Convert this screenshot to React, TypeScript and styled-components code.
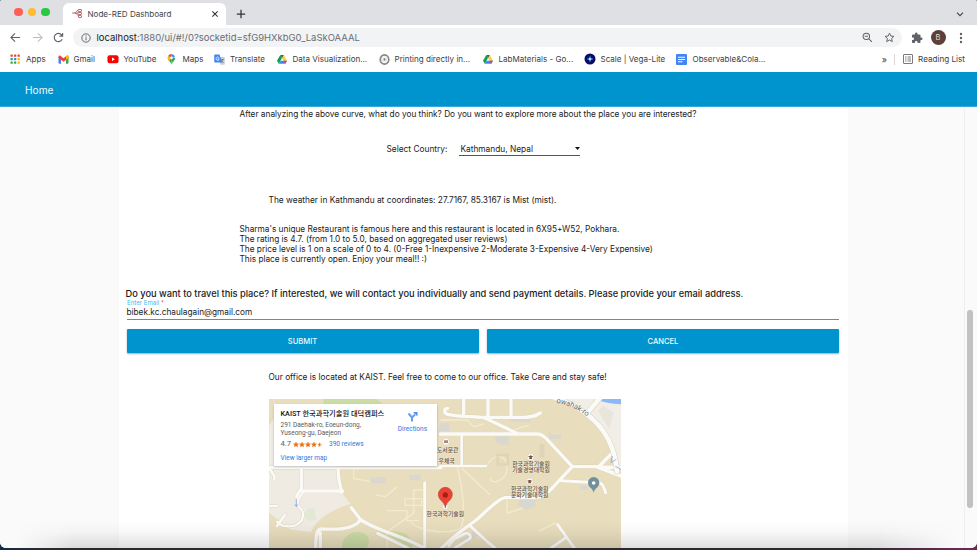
import React from "react";
import styled, { createGlobalStyle } from "styled-components";

const Global = createGlobalStyle`
  * { box-sizing: border-box; }
  html, body { margin: 0; height: 550px; overflow: hidden; background: #fff; }
  body { font-family: Inter, "Noto Sans CJK KR", sans-serif; color: #1b1b1b; }
  svg { display: block; flex: none; }
`;

const Desktop = styled.div`
  width: 977px;
  height: 550px;
  padding-bottom: 2px;
  background: linear-gradient(90deg, #132a4c 0%, #292a30 4%, #292a30 88%, #6d2850 98%);
  overflow: hidden;
`;
const Window = styled.div`
  position: relative;
  height: 548px;
  display: flex;
  flex-direction: column;
  background: #fff;
  border-radius: 2px 2px 6px 6px;
  overflow: hidden;
`;
const TabStrip = styled.div`
  height: 25px;
  flex: none;
  display: flex;
  align-items: flex-end;
  background: #dee0e4;
`;
const Lights = styled.div`
  display: flex;
  gap: 5px;
  width: 63px;
  height: 25px;
  padding: 7.5px 0 0 14px;
`;
const Light = styled.span<{ $color: string }>`
  width: 8.6px;
  height: 8.6px;
  border-radius: 50%;
  background: ${(p) => p.$color};
`;
const Tab = styled.div`
  display: flex;
  align-items: center;
  width: 163px;
  height: 22.5px;
  padding: 0 7.5px 0 9px;
  background: #fff;
  border-radius: 6px 6px 0 0;
  font-size: 8.07px;
  color: #43464a;
`;
const TabTitle = styled.span`
  flex: 1;
  margin-left: 5.5px;
  white-space: nowrap;
`;
const StripActions = styled.div`
  flex: 1;
  height: 22.5px;
  display: flex;
  align-items: center;
  justify-content: space-between;
  padding: 0 13px 0 10px;
`;
const Toolbar = styled.div`
  height: 25px;
  flex: none;
  display: flex;
  align-items: center;
  padding: 0 0 0 10px;
`;
const NavIcons = styled.div`
  display: flex;
  align-items: center;
  width: 63px;
  gap: 10.5px;
`;
const Omnibox = styled.div`
  display: flex;
  align-items: center;
  width: 829px;
  height: 19px;
  padding: 0 7px 0 8px;
  border-radius: 10px;
  background: #f1f3f4;
  font-size: 9.46px;
  color: #6a6e73;
`;
const Url = styled.span`
  flex: 1;
  margin-left: 5.5px;
  white-space: nowrap;
  b { font-weight: 400; color: #202124; }
`;
const OmniActions = styled.div`
  display: flex;
  gap: 11px;
`;
const Extensions = styled.div`
  display: flex;
  align-items: center;
  gap: 8px;
  margin-left: 8.5px;
`;
const Avatar = styled.span`
  display: grid;
  place-items: center;
  width: 15px;
  height: 15px;
  border-radius: 50%;
  background: #5d4037;
  color: #e6dcd8;
  font-size: 7.5px;
`;
const Bookmarks = styled.div`
  height: 22px;
  flex: none;
  display: flex;
  align-items: center;
  padding: 0 12px 4px 10px;
  font-size: 8.04px;
  color: #3c4043;
`;
const Bookmark = styled.span<{ $width: number; $gap?: number }>`
  display: flex;
  align-items: center;
  gap: ${(p) => p.$gap ?? 5}px;
  width: ${(p) => p.$width}px;
  white-space: nowrap;
`;
const Overflow = styled.span`
  margin-left: auto;
  font-size: 9px;
  padding-right: 7px;
`;
const ReadingList = styled.span`
  display: flex;
  align-items: center;
  gap: 5.5px;
  height: 11px;
  padding-left: 7.5px;
  border-left: 1px solid #d5d7da;
  font-size: 8.12px;
`;
const AppHeader = styled.header`
  height: 35px;
  flex: none;
  display: flex;
  align-items: center;
  padding: 1px 0 0 25px;
  background: #0094ce;
  border-bottom: 1px solid #35a9d8;
  color: #eef9fd;
  font-size: 10.17px;
`;
const Page = styled.main`
  flex: 1;
  min-height: 0;
  display: flex;
  background: #fafafa;
`;
const Card = styled.section`
  width: 729px;
  margin-left: 118.5px;
  padding: 1px 8px 0;
  background: #fff;
  display: flex;
  flex-direction: column;
  align-items: flex-start;
`;
const Line = styled.p<{ $top?: number; $indent: number; $size?: number }>`
  margin: ${(p) => p.$top ?? 0}px 0 0 ${(p) => p.$indent}px;
  line-height: 12px;
  font-size: ${(p) => p.$size ?? 8.27}px;
  white-space: nowrap;
`;
const Paragraph = styled(Line)`
  line-height: 10.2px;
  white-space: pre;
`;
const SelectRow = styled.div`
  display: flex;
  align-items: center;
  gap: 11.5px;
  height: 16px;
  margin: 21px 0 0 260px;
  font-size: 8.33px;
`;
const Select = styled.div`
  display: flex;
  align-items: center;
  justify-content: space-between;
  width: 121px;
  height: 15px;
  padding: 1px 0 0 1.5px;
  border-bottom: 1px solid #555;
`;
const Heading = styled.h3`
  margin: 23px 0 0 -1px;
  font-size: 9.285px;
  font-weight: 500;
  line-height: 12px;
  white-space: nowrap;
`;
const Field = styled.label`
  display: block;
  width: 712.5px;
  height: 20.5px;
  border-bottom: 1px solid #27a3d6;
`;
const FieldLabel = styled.span`
  display: block;
  height: 6.2px;
  padding-left: .5px;
  line-height: 6.2px;
  font-size: 6.11px;
  color: #3dbbf0;
  i { font-style: normal; color: #ef5350; }
`;
const FieldValue = styled.span`
  display: block;
  line-height: 13px;
  font-size: 8.26px;
`;
const Actions = styled.div`
  display: grid;
  grid-template-columns: 1fr 1fr;
  gap: 8.5px;
  width: 712.5px;
  margin-top: 8.7px;
`;
const Button = styled.button`
  height: 24px;
  padding: 1px 0 0;
  border: 0;
  border-radius: 1px;
  background: #0094ce;
  box-shadow: 0 1px 2px rgba(0, 0, 0, .35);
  color: #f4fbfe;
  font: 500 7.55px Inter, sans-serif;
`;
const MapFrame = styled.div`
  position: relative;
  width: 352px;
  height: 150px;
  margin: 16px 0 0 142px;
  overflow: hidden;
`;
const PlaceCard = styled.div`
  position: absolute;
  left: 5.5px;
  top: 5px;
  width: 163px;
  height: 62px;
  padding: 5px 9px 0 6.5px;
  background: #fff;
  box-shadow: 0 1px 2px rgba(0, 0, 0, .25);
  font: 6.5px/8px Roboto, "Noto Sans CJK KR", sans-serif;
  color: #5b5b5b;
  white-space: nowrap;
`;
const PlaceName = styled.div`
  height: 10px;
  line-height: 10px;
  font-size: 7.25px;
  font-weight: 500;
  color: #111;
`;
const Address = styled.div`
  margin-top: 3.7px;
  line-height: 7.6px;
`;
const Rating = styled.div`
  display: flex;
  align-items: center;
  gap: 2px;
  margin-top: 2.5px;
  height: 8px;
  b { font-weight: 400; font-size: 7.6px; }
`;
const Link = styled.a<{ $left?: number; $top?: number }>`
  display: block;
  margin: ${(p) => p.$top ?? 0}px 0 0 ${(p) => p.$left ?? 0}px;
  color: #2a78dd;
`;
const Directions = styled.div`
  position: absolute;
  right: 10px;
  top: 7.5px;
  display: flex;
  flex-direction: column;
  align-items: center;
  gap: 2.5px;
  color: #2a78dd;
`;
const Scrollbar = styled.div`
  width: 10px;
  margin: 0 3px 0 auto;
  padding: 203px 0 0 2px;
  border-left: 1px solid #efefef;
`;
const Thumb = styled.div`
  width: 5.5px;
  height: 198px;
  border-radius: 3px;
  background: #c1c1c1;
`;
const DockShade = styled.div`
  position: absolute;
  left: 15px;
  right: 20px;
  bottom: 0;
  height: 28px;
  background: linear-gradient(rgba(0, 0, 0, 0), rgba(0, 0, 0, .025) 40%, rgba(0, 0, 0, .12));
  mask-image: linear-gradient(90deg, transparent, #000 60px, #000 calc(100% - 80px), transparent);
  pointer-events: none;
`;

const Stroke = ({ size, d, color = "#5f6368", w = 2 }: { size: number; d: string; color?: string; w?: number }) => (
  <svg width={size} height={size} viewBox="0 0 24 24" fill="none" stroke={color} strokeWidth={w}>
    <path d={d} />
  </svg>
);

const NodeRed = () => (
  <svg width="10" height="9" viewBox="0 0 20 18" fill="none" stroke="#b0585c" strokeWidth="1.7">
    <path d="M0 8h5c4 0 3-5 7-5M5 8c6 0 5 6 9 6M6 8h6" />
    <rect x="12" y="1" width="7" height="4" rx="1" />
    <rect x="12" y="7" width="7" height="4" rx="1" />
    <rect x="13" y="13" width="6" height="4" rx="1" />
  </svg>
);
const colors = ["#ea4335", "#ea4335", "#ea4335", "#34a853", "#4285f4", "#fbbc04", "#34a853", "#34a853", "#fbbc04"];
const AppsGrid = () => (
  <svg width="10.5" height="10" viewBox="0 0 21 20">
    {colors.map((c, i) => (
      <rect key={i} x={1 + (i % 3) * 7} y={1 + Math.floor(i / 3) * 7} width="4.6" height="4.6" rx="1" fill={c} />
    ))}
  </svg>
);
const Gmail = () => (
  <svg width="11" height="9" viewBox="0 0 22 17">
    <path d="M1 3v12a2 2 0 0 0 2 2h3V7z" fill="#4285f4" />
    <path d="M21 3v12a2 2 0 0 1-2 2h-3V7z" fill="#34a853" />
    <path d="M1 3c0-3 3-3 5-1l5 4 5-4c2-2 5-2 5 1v2l-5 4-5 4-5-4-5-4z" fill="#ea4335" />
    <path d="M16 2c2-2 5-2 5 1v3l-5 3z" fill="#fbbc04" />
  </svg>
);
const YouTube = () => (
  <svg width="12" height="9" viewBox="0 0 24 17">
    <rect x="1" y="0" width="22" height="16" rx="4" fill="#f00" />
    <path d="M10 4.5v7l6-3.5z" fill="#fff" />
  </svg>
);
const MapsPin = () => (
  <svg width="9" height="11" viewBox="0 0 18 23">
    <path d="M9 23C8 16 1 14 1 8l8 0z" fill="#34a853" />
    <path d="M9 23c1-7 8-9 8-15H9z" fill="#34a853" />
    <path d="M2 12a8 8 0 0 1 0-8l7 4-5 7z" fill="#fbbc04" />
    <path d="M2 4a8 8 0 0 1 7-4v8z" fill="#ea4335" />
    <path d="M9 0a8 8 0 0 1 7 5L9 11z" fill="#4285f4" />
    <circle cx="9" cy="8" r="3" fill="#fff" />
  </svg>
);
const Translate = () => (
  <svg width="11" height="11" viewBox="0 0 22 22">
    <path d="M9 6h11a1.5 1.5 0 0 1 1.5 1.5V20a1.5 1.5 0 0 1-1.5 1.5h-7z" fill="#c9ccd1" />
    <path d="M2 1h9l5 16H2a1.5 1.5 0 0 1-1.5-1.5v-13A1.5 1.5 0 0 1 2 1z" fill="#4285f4" />
    <path d="M10 7.5A3.2 3.2 0 1 0 10.5 10H7.5" stroke="#fff" strokeWidth="1.5" fill="none" />
    <path d="M14 11h6M17 10v1c0 3-2 5-3 6m1-4 4 5" stroke="#5f6368" strokeWidth="1.2" fill="none" />
  </svg>
);
const Drive = () => (
  <svg width="10" height="9" viewBox="0 0 20 18">
    <path d="M6.5 0 0 11.5 3.5 17.5 10 6z" fill="#0f9d58" />
    <path d="M6.5 0h7L20 11.5h-7z" fill="#ffcd40" />
    <path d="M3.5 17.5 7 11.5h13l-3.5 6z" fill="#4285f4" />
    <path d="M13 11.5h7l-3.5 6z" fill="#ea4335" />
    <path d="M6.5 0h7L10 6z" fill="#188038" />
  </svg>
);
const Observable = () => (
  <svg width="11" height="11" viewBox="0 0 22 22" fill="none">
    <ellipse cx="11" cy="11" rx="8.5" ry="9.2" stroke="#858585" strokeWidth="3.4" />
    <circle cx="11" cy="11" r="5" stroke="#d8d8d8" strokeWidth="1.5" />
    <circle cx="11" cy="11" r="2.3" fill="#777" />
  </svg>
);
const Vega = () => (
  <svg width="12" height="12" viewBox="0 0 24 24">
    <circle cx="12" cy="12" r="11" fill="#0b0b66" />
    <path d="M12 5l1.8 5.2L19 12l-5.2 1.8L12 19l-1.8-5.2L5 12l5.2-1.8z" fill="#49a5e6" />
    <circle cx="12" cy="12" r="2" fill="#d8f3ff" />
  </svg>
);
const Docs = () => (
  <svg width="11" height="11" viewBox="0 0 22 22">
    <rect width="22" height="22" rx="2" fill="#4285f4" />
    <path d="M4 6.5h14M4 11h14M4 15.5h9" stroke="#fff" strokeWidth="2" />
  </svg>
);
const ListIcon = () => (
  <svg width="10" height="10" viewBox="0 0 20 20" fill="none" stroke="#5f6368" strokeWidth="1.7">
    <rect x="1" y="1" width="18" height="18" rx="1" />
    <path d="M4 6h3M4 10h3M4 14h3M9 6h7M9 10h7M9 14h7" />
  </svg>
);
const Puzzle = () => (
  <svg width="12" height="12" viewBox="0 0 24 24" fill="#5f6368">
    <path d="M20.5 11H19V7a2 2 0 0 0-2-2h-4V3.5a2.5 2.5 0 0 0-5 0V5H4a2 2 0 0 0-2 2v3.8h1.5a2.7 2.7 0 0 1 0 5.4H2V20a2 2 0 0 0 2 2h3.8v-1.5a2.7 2.7 0 0 1 5.4 0V22H17a2 2 0 0 0 2-2v-4h1.5a2.5 2.5 0 0 0 0-5z" />
  </svg>
);
const star = "M12 2.5l2.9 6.3 6.8.7-5.1 4.6 1.5 6.8L12 17.4l-6.1 3.5 1.5-6.8-5.1-4.6 6.8-.7z";
const Stars = () => (
  <svg width="30" height="7" viewBox="0 0 120 26">
    {[0, 1, 2, 3, 4].map((i) => (
      <path key={i} d={star} transform={`translate(${i * 24},1)`} fill={i === 4 ? "#f0bb86" : "#e7711b"} stroke={i === 4 ? "none" : "#e7711b"} strokeWidth="2" />
    ))}
    <path d="M108 3.5v15l-6 3.5 1.5-7-5-4.5 6.5-.7z" fill="#e7711b" />
  </svg>
);

const Road = styled.path<{ $w?: number }>`
  fill: none;
  stroke: #fbfaf7;
  stroke-width: ${(p) => p.$w ?? 9};
  stroke-linecap: round;
  stroke-linejoin: round;
`;
const Casing = styled(Road)`
  stroke: #ded4ba;
`;
const MapLabel = styled.text`
  font: 500 17.5px "Noto Sans CJK KR", sans-serif;
  fill: #5b5145;
  stroke: #f8f0dc;
  stroke-width: 2px;
  paint-order: stroke;
  text-anchor: middle;
`;

const roads: [string, number][] = [
  ["M26 232h205M234 228c-4 30 4 50 10 80M125 303h122M123 235v60l-15 25", 10],
  ["M128 303c5 10-20 16-16 40 4 20 20 10 16 36-5 25-30 35-60 28-10-3-14-6-18-12", 7],
  ["M26 348h24M50 408l24-34M26 233l16 25v10", 8],
  ["M273 353l28 36c40 30 130 50 190 85M301 389c-20 30-70 30-120 28-12 2-15 20-15 57M180 428v46", 10],
  ["M493 278v196M352 430l90 44M232 233h310", 9],
  ["M540 132h290c12 0 20 6 28 14l78 84h80M936 230l-62 66c-16 18-30 26-50 27h-90c-22 3-60 45-90 70-30 22-60 40-100 81", 10],
  ["M562 55c-12 0-12 16 0 18 40 8 80 6 110 10l96 46M610 28v44M683 28v50M752 28v50M650 82h140c15 0 30 0 50-13", 10],
  ["M604 134v90M540 228h137", 8],
  ["M902 272l112 6c12 0 16 12 22 30", 9],
  ["M628 406l54 50 22 18M892 404l50 70M912 446l-40 28", 9],
  ["M584 474l45-28c5-12-7-20-18-14l-30 16-16 20", 8],
  ["M1012 232h70M1020 225l30-30M1020 234l62 24", 11],
];

const CampusMap = () => (
  <svg width="352" height="150" viewBox="26 27 1056 450">
    <rect x="26" y="27" width="1056" height="450" fill="#e8ddbd" />
    <path d="M26 27h16v205h192c0 40 0 70 38 110-40 10-80 30-108 62l-12 22-62-8-64-50z" fill="#efebe3" />
    <path d="M26 27h14v60l-14 20z" fill="#e8ddbd" />
    <path d="M188 27h160l24 18H190z" fill="#cbdba5" />
    <path d="M245 474c0-30 20-48 45-48 30 0 45 20 30 48zM352 430c10-12 60-10 85 2 15 15 20 25 20 42-30-10-60-35-105-44z" fill="#cbdba5" />
    <path d="M142 355h20l6 35-26 3-10-16z" fill="#e1e8d6" />
    <path d="M890 27h192v200h-20c-10-85-50-150-172-200z" fill="#f1eee7" />
    <path d="M1005 27h77v16c-30-1-54-6-77-16z" fill="#8db8f8" />
    <path d="M1013 62l16-15 30 20-12 50z" fill="#e9e5db" />
    <g fill="none" stroke="#f3ebcf" strokeWidth="4">
      <path d="M590 225c15 60 30 160 10 190-40 20-120 10-150-20M604 235l86 80M726 160l-10-25c30-5 60-25 90-28M680 225c15-30 60-40 60 10 0 40-50 50-50 30M540 90h80l20 20 30-8M835 424l52-26" />
      <path d="M380 475v-50l80-55v-70h30M410 290l-35 30-30-6M280 230v35l50 10M820 210v35h30M740 320v50l60-20v-25" />
      <path d="M380 362h60v30h35M434 326h50v20h-50z" />
    </g>
    <g fill="#d9d7cf">
      <path d="M331 262h45v18h-45zM447 255h34v16h-34zM540 99h27v25h-35zM705 139h40v25h-25v-6h-15zM750 86h58v10h-58zM865 124l10 10h27v13h-36zM777 326h48v22l-28 12-24-14zM600 450l44-30 10 15-45 34zM960 287h22v12h-22z" />
    </g>
    <path d="M712 195h30v28h-30z" fill="none" stroke="#e0d4b2" strokeWidth="7" />
    <path d="M838 163h14v40h-14z" fill="#ded4b9" />
    {roads.map(([d, w], i) => <Casing key={i} d={d} $w={w + 2.5} />)}
    {roads.map(([d, w], i) => <Road key={i} d={d} $w={w} />)}
    <Casing d="M875 20c120 40 185 110 195 225M980 70l42-50" $w={17} />
    <Road d="M875 20c120 40 185 110 195 225M980 70l42-50" $w={14} />
    <path d="M1056 198l-4 20 16-10M1065 229l17 9M108 328v20m-5-5 5 7 5-7" fill="none" stroke="#86a7ee" strokeWidth="2.5" />
    <path id="gwahak" d="M888 38c40 7 70 22 125 66" fill="none" />
    <text fontFamily="Roboto" fontSize="22" fill="#6b6b6b"><textPath href="#gwahak">owahak-ro</textPath></text>
    <g fill="#fff" stroke="#d6cbb0" strokeWidth="1.5">
      <circle cx="557" cy="155" r="10" />
      <circle cx="811" cy="201" r="10" />
      <circle cx="808" cy="274" r="10" />
      <circle cx="555" cy="350" r="8" />
    </g>
    <path d="M552 151h4v8h-4zM558 151h4v8h-4zM803 200l8-4 8 4-8 4zM807 203h8v4h-8zM800 273l8-4 8 4-8 4zM804 276h8v4h-8z" fill="#75533f" />
    <MapLabel x="562" y="185">도서문관</MapLabel>
    <MapLabel x="559" y="219">우체국</MapLabel>
    <MapLabel x="812" y="229">한국과학기술원</MapLabel>
    <MapLabel x="812" y="247">기술경영대학원</MapLabel>
    <MapLabel x="808" y="302">한국과학기술원</MapLabel>
    <MapLabel x="808" y="320">문화기술대학원</MapLabel>
    <MapLabel x="555" y="378">한국과학기술원</MapLabel>
    <path d="M555 354c-3-22-21-22-21-41a21 21 0 0 1 42 0c0 19-18 19-21 41z" fill="#ea4335" stroke="#bd2e25" strokeWidth="1.5" />
    <circle cx="555" cy="315" r="8" fill="#a91e17" />
    <path d="M1000 308c-3-15-17-16-17-30a17 17 0 0 1 34 0c0 14-14 15-17 30z" fill="#6f909c" />
    <circle cx="1000" cy="279" r="5.5" fill="#fff" />
  </svg>
);

export default function App() {
  return (
    <Desktop>
      <Global />
      <Window>
        <TabStrip>
          <Lights>
            <Light $color="#fe5f57" />
            <Light $color="#febc2e" />
            <Light $color="#28c840" />
          </Lights>
          <Tab>
            <NodeRed />
            <TabTitle>Node-RED Dashboard</TabTitle>
            <Stroke size={8} w={3.2} d="M4 4l16 16M20 4L4 20" color="#333" />
          </Tab>
          <StripActions>
            <Stroke size={10} w={3} d="M12 2v20M2 12h20" color="#333" />
            <Stroke size={8} w={3.5} d="M3 8l9 9 9-9" color="#444" />
          </StripActions>
        </TabStrip>
        <Toolbar>
          <NavIcons>
            <Stroke size={11} w={2.4} d="M22 12H3M11 3l-9 9 9 9" />
            <Stroke size={11} w={2.2} d="M2 12h19M13 3l9 9-9 9" color="#b9bcc0" />
            <Stroke size={11} w={2.5} d="M20 15.5A9 9 0 1 1 18.5 6L21 9M21 2v7h-7" />
          </NavIcons>
          <Omnibox>
            <Stroke size={10} w={2.3} d="M12 2a10 10 0 1 0 0 20a10 10 0 1 0 0-20M12 10.5v7M12 6v2.5" />
            <Url><b>localhost</b>:1880/ui/#!/0?socketid=sfG9HXkbG0_LaSkOAAAL</Url>
            <OmniActions>
              <Stroke size={11} w={2.2} d="M9.5 2.5a7 7 0 1 0 0 14a7 7 0 1 0 0-14M15 15l6.5 6.5M6 9.5h7" />
              <Stroke size={11} w={2.1} d={star} />
            </OmniActions>
          </Omnibox>
          <Extensions>
            <Puzzle />
            <Avatar>B</Avatar>
            <svg width="12" height="12" viewBox="0 0 24 24" fill="#5f6368">
              <circle cx="14" cy="4" r="2.4" /><circle cx="14" cy="12" r="2.4" /><circle cx="14" cy="20" r="2.4" />
            </svg>
          </Extensions>
        </Toolbar>
        <Bookmarks>
          <Bookmark $width={47.5} $gap={5.5}><AppsGrid />Apps</Bookmark>
          <Bookmark $width={49}><Gmail />Gmail</Bookmark>
          <Bookmark $width={60.5}><YouTube />YouTube</Bookmark>
          <Bookmark $width={47} $gap={6.5}><MapsPin />Maps</Bookmark>
          <Bookmark $width={63}><Translate />Translate</Bookmark>
          <Bookmark $width={101.5} $gap={5.5}><Drive />Data Visualization...</Bookmark>
          <Bookmark $width={104}><Observable />Printing directly in...</Bookmark>
          <Bookmark $width={101.5} $gap={6}><Drive />LabMaterials - Go...</Bookmark>
          <Bookmark $width={92} $gap={4.5}><Vega />Scale | Vega-Lite</Bookmark>
          <Bookmark $width={95} $gap={5.5}><Docs />Observable&amp;Cola...</Bookmark>
          <Overflow>»</Overflow>
          <ReadingList><ListIcon />Reading List</ReadingList>
        </Bookmarks>
        <AppHeader>Home</AppHeader>
        <Page>
          <Card>
            <Line $indent={113}>After analyzing the above curve, what do you think? Do you want to explore more about the place you are interested?</Line>
            <SelectRow>
              Select Country:
              <Select>
                Kathmandu, Nepal
                <svg width="5" height="3" viewBox="0 0 10 6"><path d="M0 0h10L5 6z" fill="#111" /></svg>
              </Select>
            </SelectRow>
            <Line $top={37} $indent={142} $size={8.35}>The weather in Kathmandu at coordinates: 27.7167, 85.3167 is Mist (mist).</Line>
            <Paragraph $top={17.8} $indent={113}>
              {"Sharma's unique Restaurant is famous here and this restaurant is located in 6X95+W52, Pokhara.\nThe rating is 4.7. (from 1.0 to 5.0, based on aggregated user reviews)\nThe price level is 1 on a scale of 0 to 4. (0-Free 1-Inexpensive 2-Moderate 3-Expensive 4-Very Expensive)\nThis place is currently open. Enjoy your meal!! :)"}
            </Paragraph>
            <Heading>Do you want to travel this place? If interested, we will contact you individually and send payment details. Please provide your email address.</Heading>
            <Field>
              <FieldLabel>Enter Email <i>*</i></FieldLabel>
              <FieldValue>bibek.kc.chaulagain@gmail.com</FieldValue>
            </Field>
            <Actions>
              <Button>SUBMIT</Button>
              <Button>CANCEL</Button>
            </Actions>
            <Line $top={18} $indent={142}>Our office is located at KAIST. Feel free to come to our office. Take Care and stay safe!</Line>
            <MapFrame>
              <CampusMap />
              <PlaceCard>
                <PlaceName>KAIST 한국과학기술원 대덕캠퍼스</PlaceName>
                <Address>291 Daehak-ro, Eoeun-dong,<br />Yuseong-gu, Daejeon</Address>
                <Rating><b>4.7</b><Stars /><Link $left={4}>390 reviews</Link></Rating>
                <Link $top={6}>View larger map</Link>
                <Directions>
                  <svg width="11" height="11" viewBox="0 0 22 22" fill="none" stroke="#6a9df0" strokeWidth="4">
                    <path d="M10 21v-8L3 5M10 13l6-6" />
                    <path d="M12 2h9v9z" fill="#4d90ee" stroke="none" />
                  </svg>
                  Directions
                </Directions>
              </PlaceCard>
            </MapFrame>
          </Card>
          <Scrollbar><Thumb /></Scrollbar>
        </Page>
        <DockShade />
      </Window>
    </Desktop>
  );
}
